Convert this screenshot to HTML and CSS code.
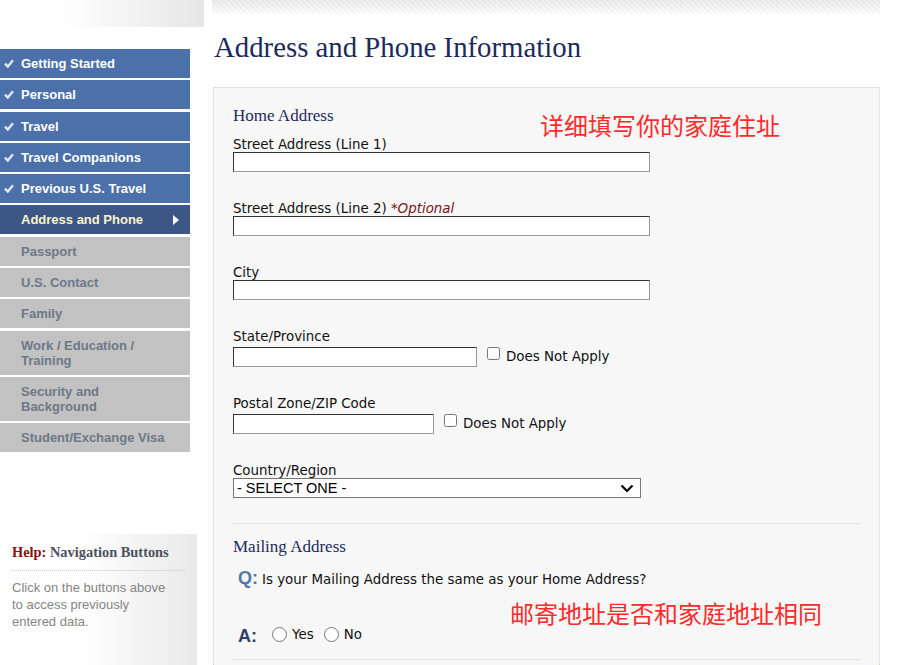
FILE: index.html
```html
<!DOCTYPE html>
<html lang="en">
<head>
    <meta charset="UTF-8">
    <title>Address and Phone Information</title>
    <link rel="stylesheet" href="styles.css">
</head>
<body>
    <div class="page">
        <div class="sidebar">
            <div class="side-top"></div>

            <ul class="nav">
                <li class="done"><svg class="check" width="10" height="9" viewBox="0 0 10 9"><path d="M1 4.6 L3.8 7.6 L9 1.2" fill="none" stroke="#dfe6f2" stroke-width="2.4"/></svg>Getting Started</li>
                <li class="done"><svg class="check" width="10" height="9" viewBox="0 0 10 9"><path d="M1 4.6 L3.8 7.6 L9 1.2" fill="none" stroke="#dfe6f2" stroke-width="2.4"/></svg>Personal</li>
                <li class="done"><svg class="check" width="10" height="9" viewBox="0 0 10 9"><path d="M1 4.6 L3.8 7.6 L9 1.2" fill="none" stroke="#dfe6f2" stroke-width="2.4"/></svg>Travel</li>
                <li class="done"><svg class="check" width="10" height="9" viewBox="0 0 10 9"><path d="M1 4.6 L3.8 7.6 L9 1.2" fill="none" stroke="#dfe6f2" stroke-width="2.4"/></svg>Travel Companions</li>
                <li class="done"><svg class="check" width="10" height="9" viewBox="0 0 10 9"><path d="M1 4.6 L3.8 7.6 L9 1.2" fill="none" stroke="#dfe6f2" stroke-width="2.4"/></svg>Previous U.S. Travel</li>
                <li class="active">Address and Phone<span class="arrow"></span></li>
                <li class="todo">Passport</li>
                <li class="todo">U.S. Contact</li>
                <li class="todo">Family</li>
                <li class="todo">Work / Education /<br>Training</li>
                <li class="todo">Security and<br>Background</li>
                <li class="todo">Student/Exchange Visa</li>
            </ul>

            <div class="help">
                <div class="help-title"><span class="help-label">Help:</span> Navigation Buttons</div>
                <p>Click on the buttons above to access previously entered data.</p>
            </div>
        </div>

        <div class="main">
            <div class="main-top"></div>
            <h1>Address and Phone Information</h1>

            <div class="form-box">
                <div class="section">
                    <h2>Home Address</h2>
                    <span class="note note-home">详细填写你的家庭住址</span>

                    <div class="field">
                        <label>Street Address (Line 1)</label>
                        <input type="text" class="w-long">
                    </div>
                    <div class="field">
                        <label>Street Address (Line 2) <em>*Optional</em></label>
                        <input type="text" class="w-long">
                    </div>
                    <div class="field">
                        <label>City</label>
                        <input type="text" class="w-long">
                    </div>
                    <div class="field">
                        <label>State/Province</label>
                        <div class="row">
                            <input type="text" class="w-mid">
                            <span class="na"><input type="checkbox"> Does Not Apply</span>
                        </div>
                    </div>
                    <div class="field">
                        <label>Postal Zone/ZIP Code</label>
                        <div class="row">
                            <input type="text" class="w-short">
                            <span class="na"><input type="checkbox"> Does Not Apply</span>
                        </div>
                    </div>
                    <div class="field last">
                        <label>Country/Region</label>
                        <div class="select">
                            <span>- SELECT ONE -</span>
                            <svg width="14" height="9" viewBox="0 0 14 9"><path d="M1.5 1.5 L7 7 L12.5 1.5" fill="none" stroke="#000" stroke-width="2.2"/></svg>
                        </div>
                    </div>
                </div>

                <div class="section mailing">
                    <h2>Mailing Address</h2>
                    <div class="qa">
                        <span class="q">Q:</span>
                        <span>Is your Mailing Address the same as your Home Address?</span>
                    </div>
                    <span class="note note-mail">邮寄地址是否和家庭地址相同</span>
                    <div class="qa answer">
                        <span class="a">A:</span>
                        <label class="radio"><input type="radio" name="same"> Yes</label>
                        <label class="radio"><input type="radio" name="same"> No</label>
                    </div>
                </div>
            </div>
        </div>
    </div>
</body>
</html>
```

FILE: styles.css
```css
* {
    margin: 0;
    padding: 0;
    box-sizing: border-box;
}

body {
    background: #fff;
    font-family: "DejaVu Sans", Verdana, sans-serif;
    height: 665px;
    overflow: hidden;
}

.page {
    display: flex;
}

/* left column */
.sidebar {
    width: 204px;
    flex-shrink: 0;
}

.side-top {
    height: 27px;
    background: linear-gradient(to right, #fff 30%, #e6e6e6 100%);
}

.nav {
    list-style: none;
    width: 190px;
    margin-top: 22px;
    font-family: "Liberation Sans", Arial, sans-serif;
    font-size: 13px;
    font-weight: bold;
}

.nav li {
    position: relative;
    padding: 7px 0 7px 21px;
    line-height: 15px;
    margin-bottom: 2.3px;
}

.nav .done {
    background: #4b70aa;
    color: #fff;
}

.nav .check {
    position: absolute;
    left: 4px;
    top: 10px;
}

.nav .active {
    background: #3c5685;
    color: #fdf3c8;
}

.nav .arrow {
    position: absolute;
    right: 11px;
    top: 10px;
    border-left: 6px solid #fff;
    border-top: 5px solid transparent;
    border-bottom: 5px solid transparent;
}

.nav .todo {
    background: #c2c2c2;
    color: #6d7888;
}

.help {
    margin-top: 82px;
    width: 197px;
    height: 140px;
    padding: 10px 25px 10px 12px;
    background: linear-gradient(to right, #fff 40%, #e9e9e9 100%);
}

.help-title {
    font-family: "Liberation Serif", "Times New Roman", serif;
    font-size: 14.4px;
    font-weight: bold;
    color: #4a5160;
    padding-bottom: 9px;
    border-bottom: 1px dotted #c8c8c8;
    margin-right: -13px;
}

.help-label {
    color: #8b0d0d;
}

.help p {
    margin-top: 8px;
    font-family: "Liberation Sans", Arial, sans-serif;
    font-size: 13px;
    line-height: 17px;
    color: #858585;
}

/* main column */
.main {
    margin-left: 8px;
    width: 668px;
}

.main-top {
    height: 14px;
    background:
        repeating-linear-gradient(45deg, rgba(0,0,0,0.03) 0 2px, transparent 2px 4px),
        linear-gradient(to bottom, #ececec, #fff);
}

.main h1 {
    font-family: "Liberation Serif", "Times New Roman", serif;
    font-weight: normal;
    font-size: 28.8px;
    color: #1c2a5c;
    margin: 17px 0 24px 2px;
    line-height: 32px;
}

.form-box {
    margin-left: 1px;
    width: 667px;
    height: 600px;
    background: #f7f7f7;
    border: 1px dotted #dcd3c0;
    border-bottom: none;
    padding: 18px 20px 0 19px;
}

.section {
    position: relative;
    border-bottom: 1px dotted #cfcfcf;
}

.section h2 {
    font-family: "Liberation Serif", Georgia, serif;
    font-weight: normal;
    font-size: 17px;
    color: #1c2a5c;
    line-height: 20px;
    margin-bottom: 9px;
}

.note {
    position: absolute;
    color: #ff2a2a;
    font-family: "Noto Sans CJK SC", sans-serif;
    font-size: 24px;
    line-height: 30px;
}

.note-home {
    left: 307px;
    top: 4px;
}

.note-mail {
    left: 277px;
    top: 74px;
}

.field {
    margin-bottom: 27px;
    font-size: 13.4px;
    color: #111;
}

.field.last {
    margin-bottom: 25px;
}

.field label {
    display: block;
    line-height: 15px;
    padding-top: 2px;
}

.field em {
    color: #7a1414;
}

.field input[type="text"] {
    display: block;
    height: 20px;
    background: #fff;
    border: 1px solid;
    border-color: #333 #999 #999 #333;
}

.w-long { width: 417px; }
.w-mid { width: 244px; }
.w-short { width: 201px; }

.row {
    display: flex;
    align-items: flex-start;
    margin-top: 3px;
}

.na {
    display: flex;
    align-items: center;
    margin-left: 10px;
    padding-top: 2px;
}

.na input {
    margin: 0 6px 0 0;
    width: 13px;
    height: 13px;
    position: relative;
    top: -3px;
}

.select {
    width: 408px;
    height: 20px;
    background: #fff;
    border: 1px solid #767676;
    display: flex;
    align-items: center;
    justify-content: space-between;
    padding: 0 6px 0 3px;
    font-family: "Liberation Sans", Arial, sans-serif;
    font-size: 14.5px;
    color: #000;
}

.mailing {
    padding-top: 13px;
    height: 136px;
}

.qa {
    display: flex;
    align-items: baseline;
    font-size: 13.4px;
    color: #111;
    margin-top: 11px;
    padding-left: 5px;
}

.q,
.a {
    font-family: "Liberation Sans", Arial, sans-serif;
    font-weight: bold;
    font-size: 18px;
    width: 24px;
}

.q {
    color: #5277ad;
}

.a {
    color: #2d3e66;
    width: 34px;
}

.answer {
    margin-top: 37px;
}

.radio {
    display: inline-flex;
    align-items: center;
    margin-right: 10px;
}

.radio input {
    width: 15px;
    height: 15px;
    margin: 0 5px 0 0;
}
```
